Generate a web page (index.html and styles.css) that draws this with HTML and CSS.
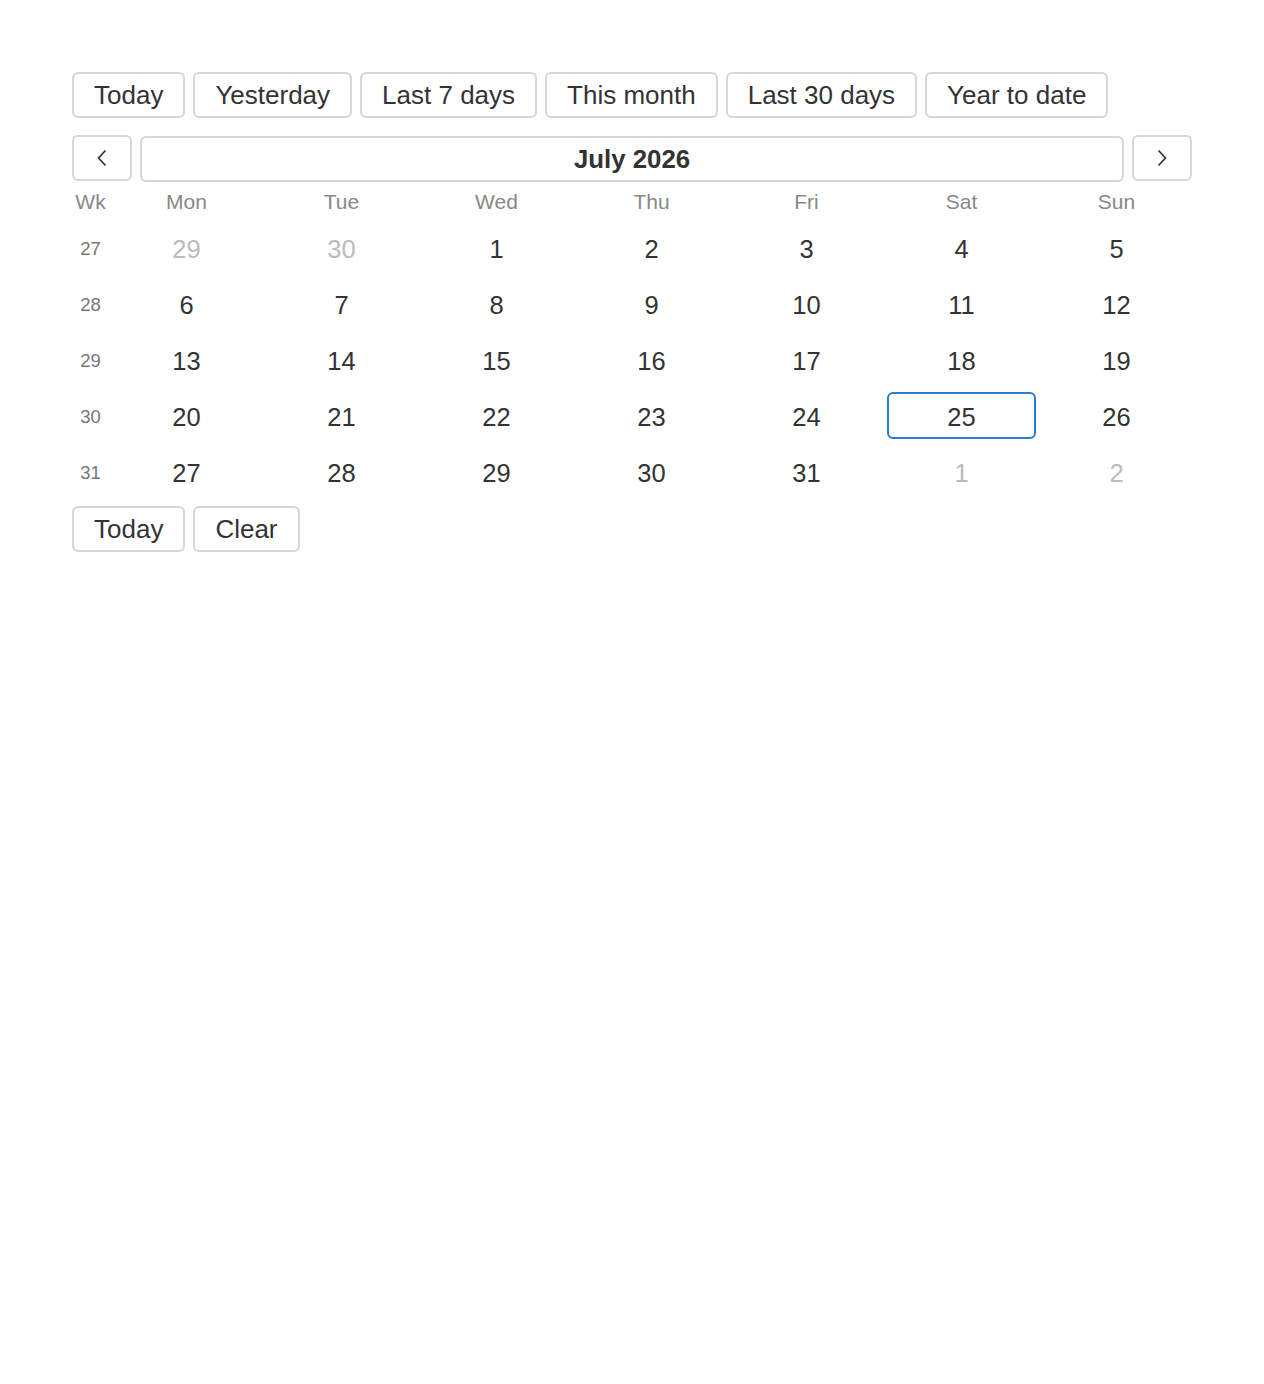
FILE: index.html
```html
<!DOCTYPE html>
<html>
<head>
<meta charset="utf-8">
<link rel="stylesheet" href="styles.css">
</head>
<body>
<div class="picker">
  <div class="presets">
    <button class="btn">Today</button>
    <button class="btn">Yesterday</button>
    <button class="btn">Last 7 days</button>
    <button class="btn">This month</button>
    <button class="btn">Last 30 days</button>
    <button class="btn">Year to date</button>
  </div>
  <div class="nav">
    <button class="btn nav-btn" aria-label="Previous month"><svg width="14" height="18" viewBox="0 0 14 18"><path d="M10.5 1.5 L3.5 9 L10.5 16.5" fill="none" stroke="#333" stroke-width="1.7"/></svg></button>
    <button class="btn title">July 2026</button>
    <button class="btn nav-btn" aria-label="Next month"><svg width="14" height="18" viewBox="0 0 14 18"><path d="M3.5 1.5 L10.5 9 L3.5 16.5" fill="none" stroke="#333" stroke-width="1.7"/></svg></button>
  </div>
  <div class="grid">
    <div class="hd wk">Wk</div><div class="hd">Mon</div><div class="hd">Tue</div><div class="hd">Wed</div><div class="hd">Thu</div><div class="hd">Fri</div><div class="hd">Sat</div><div class="hd">Sun</div>

    <div class="wkn">27</div><div class="day muted">29</div><div class="day muted">30</div><div class="day">1</div><div class="day">2</div><div class="day">3</div><div class="day">4</div><div class="day">5</div>
    <div class="wkn">28</div><div class="day">6</div><div class="day">7</div><div class="day">8</div><div class="day">9</div><div class="day">10</div><div class="day">11</div><div class="day">12</div>
    <div class="wkn">29</div><div class="day">13</div><div class="day">14</div><div class="day">15</div><div class="day">16</div><div class="day">17</div><div class="day">18</div><div class="day">19</div>
    <div class="wkn">30</div><div class="day">20</div><div class="day">21</div><div class="day">22</div><div class="day">23</div><div class="day">24</div><div class="day selected">25</div><div class="day">26</div>
    <div class="wkn">31</div><div class="day">27</div><div class="day">28</div><div class="day">29</div><div class="day">30</div><div class="day">31</div><div class="day muted">1</div><div class="day muted">2</div>
  </div>
  <div class="footer">
    <button class="btn">Today</button>
    <button class="btn">Clear</button>
  </div>
</div>
</body>
</html>
```

FILE: styles.css
```css
html, body {
  margin: 0;
  padding: 0;
  background: #fff;
}
body {
  padding: 72px;
  font-family: "Liberation Sans", Arial, sans-serif;
  color: #333;
}
.picker {
  width: 1120px;
}
.btn {
  font-family: "Liberation Sans", Arial, sans-serif;
  font-size: 26px;
  color: #333;
  background: #fff;
  border: 2px solid #d6d6d6;
  border-radius: 6px;
  height: 46px;
  padding: 0 20px;
  margin: 0;
  display: inline-flex;
  align-items: center;
  justify-content: center;
  box-sizing: border-box;
  cursor: pointer;
}
.presets {
  display: flex;
  gap: 8px;
}
.nav {
  display: flex;
  gap: 8px;
  margin-top: 17px;
}
.nav-btn {
  width: 60px;
  padding: 0;
}
.title {
  flex: 1;
  font-weight: bold;
  font-size: 25.8px;
  margin-top: 1px;
}
.grid {
  display: grid;
  grid-template-columns: 37px repeat(7, 155px);
  grid-auto-rows: 56px;
  grid-template-rows: 37px;
  margin-top: 1px;
}
.hd {
  display: flex;
  align-items: center;
  justify-content: center;
  font-size: 21px;
  color: #888;
}
.wkn {
  display: flex;
  align-items: center;
  justify-content: center;
  font-size: 18.5px;
  color: #777;
  padding-top: 2px;
}
.day {
  display: flex;
  align-items: center;
  justify-content: center;
  font-size: 25.5px;
  color: #333;
  margin: 4px 3px 5px;
  padding-top: 3px;
  box-sizing: border-box;
  border: 2px solid transparent;
  border-radius: 6px;
}
.day.muted {
  color: #bbb;
}
.day.selected {
  border-color: #2a7bd2;
}
.footer {
  display: flex;
  gap: 8px;
  margin-top: 6px;
}
```
